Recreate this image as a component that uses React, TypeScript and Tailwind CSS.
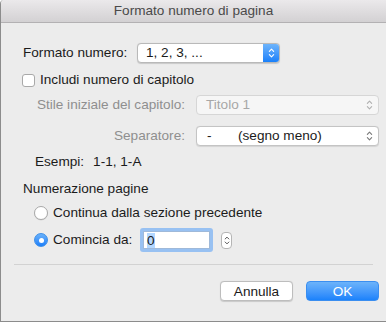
function UpDown({ className }: { className: string }) {
  return (
    <svg viewBox="0 0 8 14" className={className} fill="none" stroke="currentColor" strokeWidth="1.3" strokeLinecap="round" strokeLinejoin="round">
      <path d="M1.5 5 L4 2.5 L6.5 5" />
      <path d="M1.5 9 L4 11.5 L6.5 9" />
    </svg>
  );
}

function Radio({ checked }: { checked: boolean }) {
  if (checked) {
    return (
      <span className="w-[14px] h-[14px] shrink-0 rounded-full bg-gradient-to-b from-[#69b1fa] to-[#1a7ff9] border border-[#3d8fe8] flex items-center justify-center">
        <span className="w-[5px] h-[5px] rounded-full bg-white" />
      </span>
    );
  }
  return <span className="w-[14px] h-[14px] shrink-0 rounded-full bg-white border border-[#a9a9a9] shadow-[0_0.5px_0.5px_rgba(0,0,0,0.1)]" />;
}

export default function App() {
  return (
    <div className="w-[386px] h-[322px] bg-[#ececec] border-l border-b border-[#8c8c8c] rounded-tl-[4px] flex flex-col text-[13.6px] text-[#1b1b1b] font-['Helvetica_Neue','Liberation_Sans',Arial,sans-serif] overflow-hidden">
      <div className="h-[23px] shrink-0 bg-gradient-to-b from-[#ebe9eb] to-[#d3d1d3] border-b border-[#b3b1b3] flex items-center justify-center text-[#4a4a4a]">
        Formato numero di pagina
      </div>

      <div className="flex flex-col pt-[20px] whitespace-nowrap">
        <div className="h-[20px] flex items-center">
          <span className="ml-[22px] w-[114px]">Formato numero:</span>
          <div className="w-[143px] h-[20px] bg-white border border-[#b9b9b9] rounded-[4px] flex items-center overflow-hidden shadow-[0_0.5px_1px_rgba(0,0,0,0.15)]">
            <span className="flex-1 pl-[8px]">1, 2, 3, ...</span>
            <span className="w-[16px] h-full bg-gradient-to-b from-[#6db4fb] to-[#1780fa] flex items-center justify-center text-white">
              <UpDown className="w-[7px] h-[12px]" />
            </span>
          </div>
        </div>

        <div className="h-[20px] mt-[7px] flex items-center">
          <span className="ml-[21px] w-[13px] h-[13px] bg-white border border-[#a9a9a9] rounded-[3px]" />
          <span className="ml-[5px]">Includi numero di capitolo</span>
        </div>

        <div className="h-[20px] mt-[5px] flex items-center">
          <span className="w-[184px] text-right text-[#8f8f8f]">Stile iniziale del capitolo:</span>
          <div className="ml-[11px] w-[183px] h-[20px] bg-[#f6f6f6] border border-[#d6d6d6] rounded-[4px] flex items-center text-[#a7a7a7]">
            <span className="flex-1 pl-[9px]">Titolo 1</span>
            <UpDown className="w-[7px] h-[12px] mr-[5px] text-[#b0b0b0]" />
          </div>
        </div>

        <div className="h-[20px] mt-[11px] flex items-center">
          <span className="w-[184px] text-right text-[#8f8f8f]">Separatore:</span>
          <div className="ml-[11px] w-[183px] h-[20px] bg-white border border-[#c4c4c4] rounded-[4px] flex items-center shadow-[0_0.5px_1px_rgba(0,0,0,0.1)]">
            <span className="pl-[10px] w-[41px]">-</span>
            <span className="flex-1">(segno meno)</span>
            <UpDown className="w-[7px] h-[12px] mr-[5px] text-[#7a7a7a]" />
          </div>
        </div>

        <div className="h-[20px] mt-[6px] flex items-center pl-[34px]">
          <span>Esempi:</span>
          <span className="ml-[9px]">1-1, 1-A</span>
        </div>

        <div className="h-[20px] mt-[7px] flex items-center pl-[22px]">Numerazione pagine</div>

        <div className="h-[20px] mt-[4px] flex items-center pl-[33px] gap-[5px]">
          <Radio checked={false} />
          <span>Continua dalla sezione precedente</span>
        </div>

        <div className="h-[24px] mt-[5px] flex items-center pl-[33px]">
          <Radio checked={true} />
          <span className="ml-[5px] w-[87px]">Comincia da:</span>
          <div className="w-[73px] h-[24px] rounded-[3px] bg-[#98c1f2] p-[3px]">
            <div className="w-full h-full bg-white border border-[#9fb9d9] flex items-center pl-[3px]">
              <span className="bg-[#b3d7ff] leading-[15px]">0</span>
            </div>
          </div>
          <span className="ml-[8px] w-[11px] h-[17px] bg-white border border-[#b5b5b5] rounded-[4px] flex items-center justify-center text-[#555]">
            <UpDown className="w-[6px] h-[11px]" />
          </span>
        </div>

        <div className="mt-[12px] mx-[13px] h-px bg-[#d2d2d2]" />

        <div className="mt-[16px] flex justify-end pr-[7px] gap-[13px]">
          <button className="w-[73px] h-[20px] bg-white border border-[#bdbdbd] rounded-[4px] shadow-[0_0.5px_1px_rgba(0,0,0,0.15)]">
            Annulla
          </button>
          <button className="w-[73px] h-[20px] rounded-[4px] bg-gradient-to-b from-[#6cb3fa] to-[#1a82fb] border border-[#3a8ef0] text-white">
            OK
          </button>
        </div>
      </div>
    </div>
  );
}
